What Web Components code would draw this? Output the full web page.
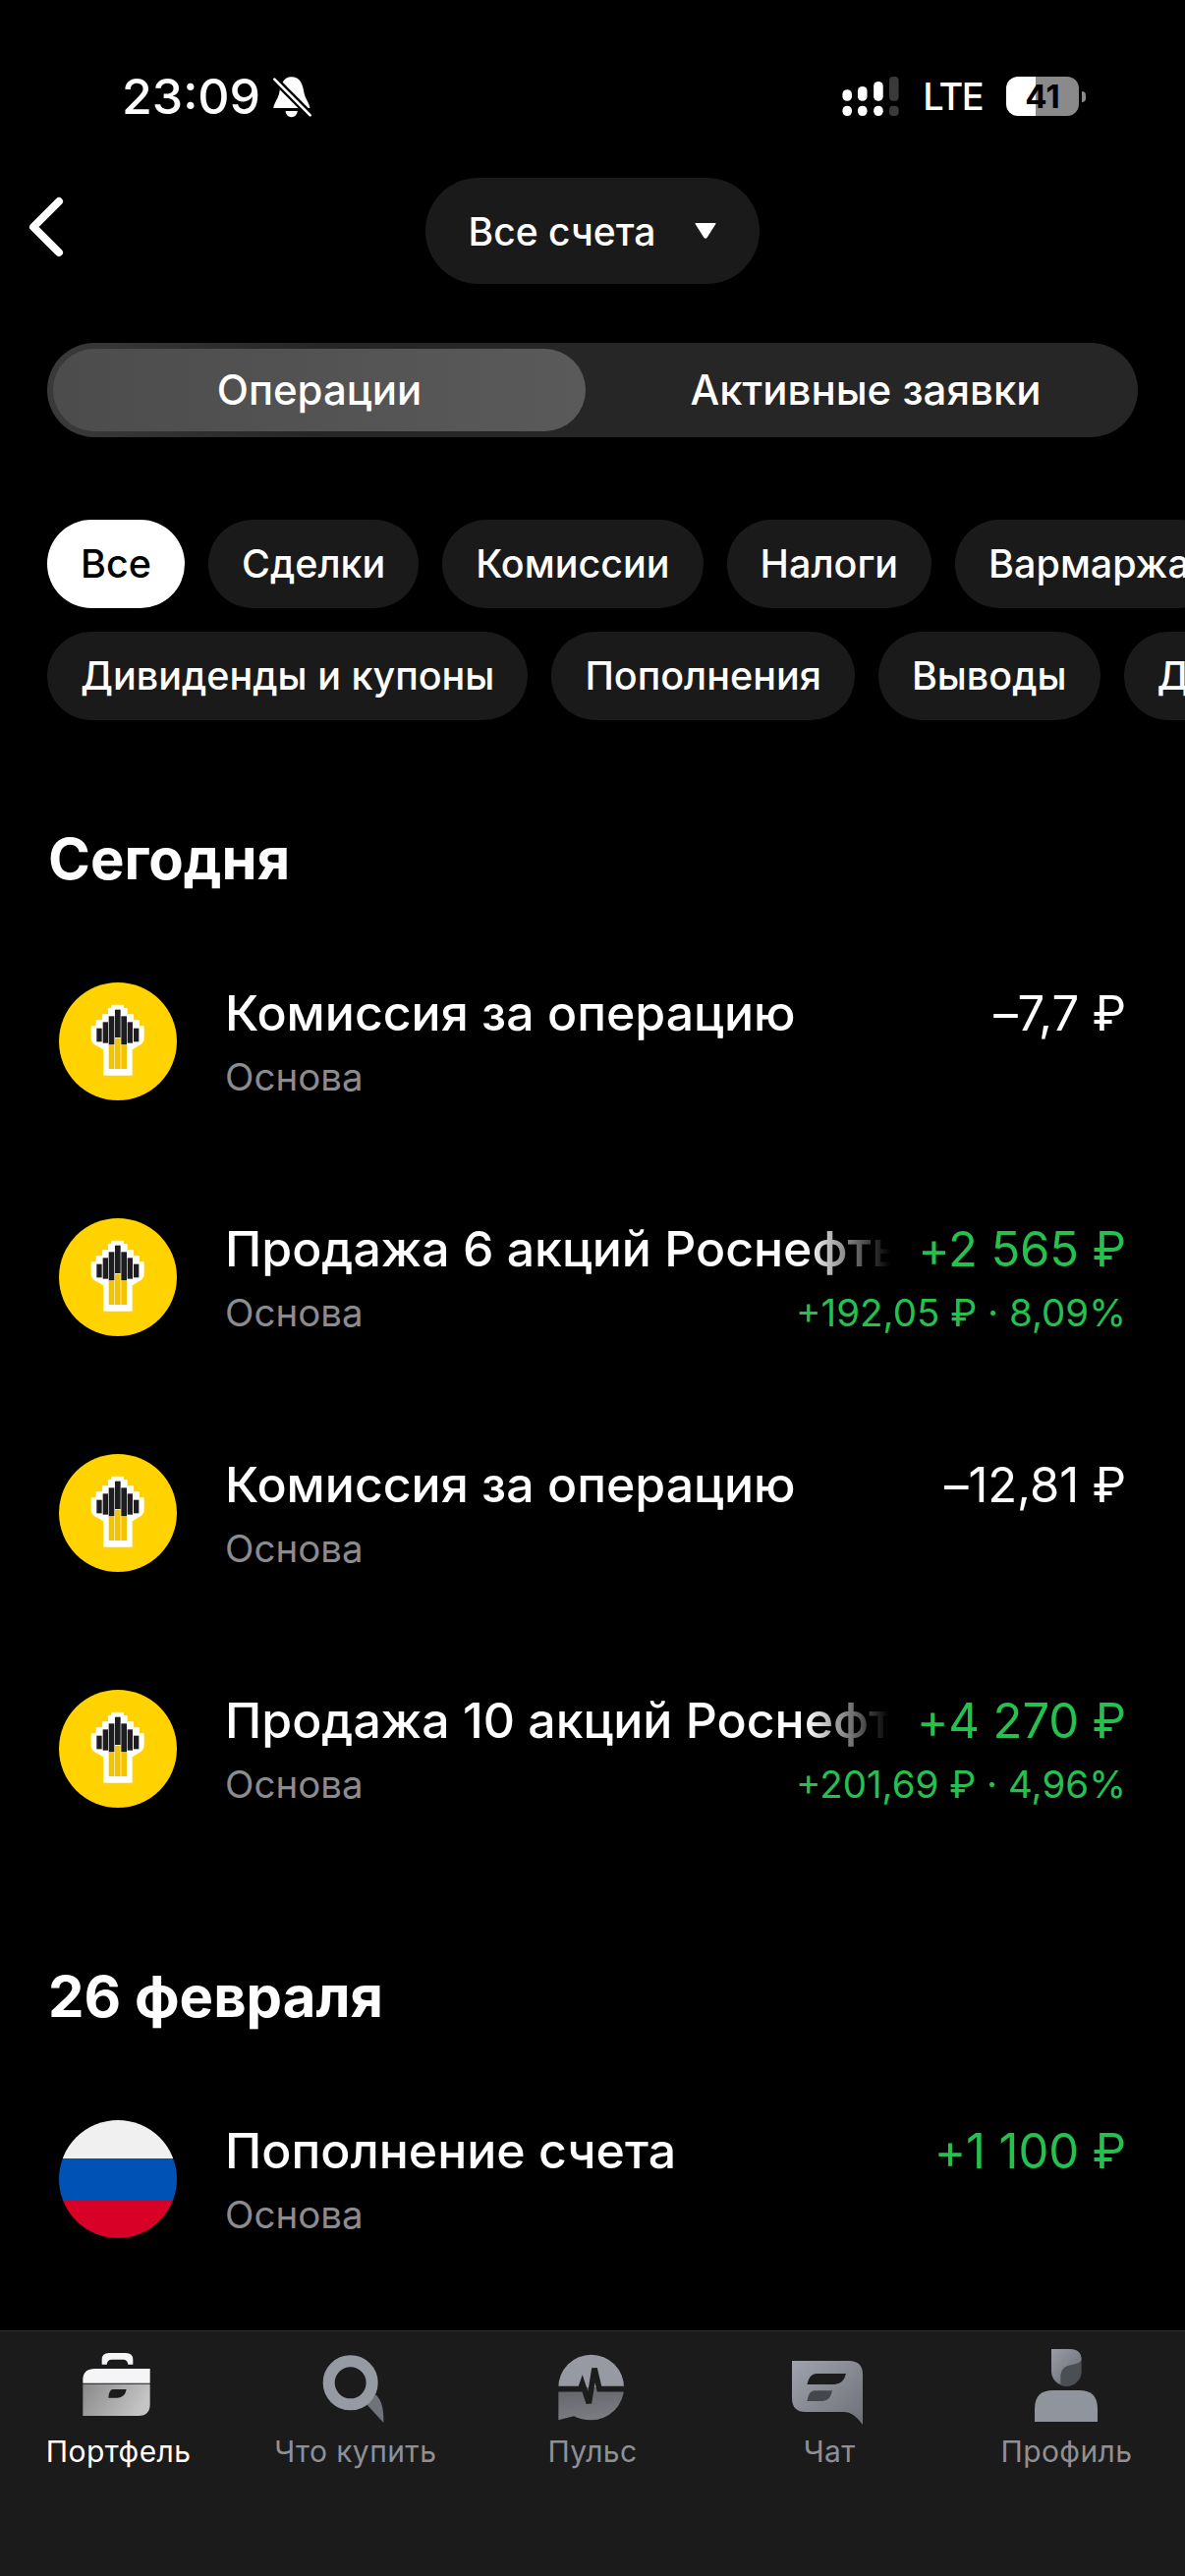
<!DOCTYPE html>
<html lang="ru">
<head>
<meta charset="UTF-8">
<title>Операции</title>
<style>
  html, body { margin: 0; background: #000; }
  body { font-family: Inter, "Noto Sans", sans-serif; color: #fff; width: 1206px; height: 2622px; overflow: hidden; }
</style>
</head>
<body>

<ops-screen>
  <status-bar></status-bar>
  <account-header>Все счета</account-header>
  <seg-tabs first="Операции" second="Активные заявки"></seg-tabs>
  <chip-rows>
    <op-chip active>Все</op-chip><op-chip>Сделки</op-chip><op-chip>Комиссии</op-chip><op-chip>Налоги</op-chip><op-chip>Вармаржа</op-chip>
    <op-chip slot="second">Дивиденды и купоны</op-chip><op-chip slot="second">Пополнения</op-chip><op-chip slot="second">Выводы</op-chip><op-chip slot="second">Другое</op-chip>
  </chip-rows>

  <op-section title="Сегодня">
    <op-row>
      <rosneft-logo slot="icon"></rosneft-logo>
      Комиссия за операцию
      <span slot="amount">–7,7 ₽</span>
    </op-row>
    <op-row fade positive>
      <rosneft-logo slot="icon"></rosneft-logo>
      Продажа 6 акций Роснефть
      <span slot="amount">+2 565 ₽</span>
      <span slot="gain">+192,05 ₽ · 8,09%</span>
    </op-row>
    <op-row>
      <rosneft-logo slot="icon"></rosneft-logo>
      Комиссия за операцию
      <span slot="amount">–12,81 ₽</span>
    </op-row>
    <op-row fade positive>
      <rosneft-logo slot="icon"></rosneft-logo>
      Продажа 10 акций Роснефть
      <span slot="amount">+4 270 ₽</span>
      <span slot="gain">+201,69 ₽ · 4,96%</span>
    </op-row>
  </op-section>

  <op-section title="26 февраля" class="next">
    <op-row positive>
      <flag-ru slot="icon"></flag-ru>
      Пополнение счета
      <span slot="amount">+1 100 ₽</span>
    </op-row>
  </op-section>

  <tab-bar slot="bottom">
    <tab-item active label="Портфель">
      <svg viewBox="0 0 330 300" width="110" height="100">
        <defs>
          <linearGradient id="bc" x1="0" y1="0" x2="1" y2="0.3"><stop offset="0" stop-color="#8a8a8a"/><stop offset="1" stop-color="#c4c4c4"/></linearGradient>
        </defs>
        <g transform="translate(13 15)">
          <path d="M100 65 V50 Q100 30 122 30 H173 Q195 30 195 50 V65 H180 Q178 50 165 50 H130 Q117 50 115 65 Z" fill="#f5f5f7"/>
          <path d="M42 122 V112 Q42 78 80 78 H247 V122 Z" fill="#f5f5f7"/>
          <path d="M42 125 H247 V187 Q247 222 212 222 H42 Z" fill="url(#bc)"/>
          <path d="M134 141 H175 Q170 167 148 167 H120 Q122 141 134 141 Z" fill="#1c1c1c"/>
        </g>
      </svg>
    </tab-item>
    <tab-item label="Что купить">
      <svg viewBox="0 0 330 300" width="110" height="100">
        <path d="M197 200 L226 172 Q252 195 250 258 Z" fill="#6f7278"/>
        <circle cx="149" cy="136" r="66" fill="none" stroke="#959aa3" stroke-width="36"/>
      </svg>
    </tab-item>
    <tab-item label="Пульс">
      <svg viewBox="0 0 330 300" width="110" height="100">
        <defs>
          <linearGradient id="pu" x1="0" y1="0" x2="0.2" y2="1"><stop offset="0" stop-color="#62646a"/><stop offset="1" stop-color="#7a7c82"/></linearGradient>
        </defs>
        <g transform="translate(6 0)">
          <path d="M55 150 A100 100 0 0 1 255 150 Z" fill="#979aa2"/>
          <path d="M55 150 H255 A100 100 0 0 1 155 250 Q125 250 102 238 L55 250 Z" fill="url(#pu)"/>
          <path d="M50 155 H122 L128 138 L148 198 L165 92 L180 155 H260" fill="none" stroke="#1c1c1c" stroke-width="17" stroke-linejoin="miter"/>
        </g>
      </svg>
    </tab-item>
    <tab-item label="Чат">
      <svg viewBox="0 0 330 300" width="110" height="100">
        <defs>
          <linearGradient id="ch" x1="0" y1="0" x2="1" y2="1"><stop offset="0" stop-color="#a0a3ac"/><stop offset="1" stop-color="#6d7076"/></linearGradient>
        </defs>
        <path d="M51 69 H225 Q267 69 267 111 V264 Q240 225 210 225 H93 Q51 225 51 183 Z" fill="url(#ch)"/>
        <path d="M125 108 H216 Q208 141 180 141 H97 Q105 108 125 108 Z" fill="#1c1c1c"/>
        <path d="M120 160 H174 Q168 192 145 192 H97 Q102 160 120 160 Z" fill="#44474c"/>
      </svg>
    </tab-item>
    <tab-item label="Профиль">
      <svg viewBox="0 0 330 300" width="110" height="100">
        <defs>
          <linearGradient id="he" x1="0" y1="0" x2="1" y2="1"><stop offset="0" stop-color="#9a9da6"/><stop offset="1" stop-color="#676a70"/></linearGradient>
        </defs>
        <path d="M69 255 V215 Q69 159 125 159 H205 Q261 159 261 215 V255 Z" fill="#90949c"/>
        <path d="M120 33 H175 Q212 33 212 70 V101 A46 46 0 0 1 120 101 Z" fill="#4b4e53"/>
        <path d="M120 33 H175 Q212 33 212 66 Q205 78 185 80 Q150 84 148 112 L148 140 Q122 130 120 101 Z" fill="url(#he)"/>
      </svg>
    </tab-item>
  </tab-bar>
</ops-screen>

<script>
  // small helper: every element gets its own open shadow root and style
  function comp(name, css, html, init) {
    customElements.define(name, class extends HTMLElement {
      constructor() {
        super();
        const root = this.attachShadow({mode: 'open'});
        root.innerHTML = `<style>${css}</style>${html}`;
      }
      connectedCallback() {
        if (init) init(this, this.shadowRoot);
      }
    });
  }

  comp('ops-screen', `
    :host { display: flex; flex-direction: column; width: 1206px; height: 2622px; background: #000; }
    main { flex: 1; min-height: 0; overflow: hidden; }
  `, `<main><slot></slot></main><slot name="bottom"></slot>`);

  comp('status-bar', `
    :host { display: flex; align-items: center; justify-content: space-between; height: 52px; padding: 72px 101px 57px 124px; }
    .left, .right { display: flex; align-items: center; }
    .time { font-size: 50px; font-weight: 500; line-height: 52px; }
    .left svg { margin-left: 12px; }
    .lte { font-size: 38px; font-weight: 500; line-height: 52px; margin: 0 24px; letter-spacing: -1.6px; }
    .batt { width: 74px; height: 40px; border-radius: 12px; background: linear-gradient(90deg, #fff 41%, #8a8a8a 41%);
      color: #000; font-size: 33px; font-weight: 700; line-height: 40px; text-align: center; }
    .tip { width: 4px; height: 11px; margin-left: 3px; background: #8a8a8a; border-radius: 0 6px 6px 0; }
  `, `
    <div class="left">
      <span class="time">23:09</span>
      <svg viewBox="535 78 122 130" width="41" height="43">
        <path d="M593 82 C620 82 628 105 632 130 C636 150 650 165 650 178 H538 C538 165 552 150 556 130 C560 105 570 82 593 82 Z" fill="#fff"/>
        <path d="M575 187 H612 A18 18 0 0 1 575 187 Z" fill="#fff"/>
        <path d="M538 86 L652 200" stroke="#000" stroke-width="22"/>
        <path d="M541 89 L651 200" stroke="#fff" stroke-width="8" stroke-linecap="round"/>
      </svg>
    </div>
    <div class="right">
      <svg viewBox="178 82 173 121" width="58" height="40">
        <g fill="#fff">
          <rect x="178" y="122" width="29" height="35" rx="14"/><rect x="225" y="112" width="29" height="45" rx="14"/><rect x="274" y="97" width="29" height="60" rx="14"/>
          <rect x="178" y="172" width="29" height="31" rx="14"/><rect x="225" y="172" width="29" height="31" rx="14"/><rect x="274" y="172" width="29" height="31" rx="14"/>
        </g>
        <g fill="#3a3a3a">
          <rect x="322" y="82" width="29" height="75" rx="12"/><rect x="322" y="172" width="29" height="31" rx="12"/>
        </g>
      </svg>
      <span class="lte">LTE</span>
      <span class="batt">41</span><span class="tip"></span>
    </div>
  `);

  comp('account-header', `
    :host { display: grid; grid-template-columns: 1fr auto 1fr; align-items: center; height: 108px; margin-bottom: 60px; }
    svg.back { margin: -8px 0 0 27px; display: block; }
    .pill { display: flex; align-items: center; gap: 40px; height: 108px; padding: 0 44px; border-radius: 54px; background: #1a1a1a;
      font-size: 39px; font-weight: 500; }
  `, `
    <svg class="back" viewBox="0 0 40 62" width="40" height="62">
      <path d="M33 5 L7 31 L33 57" fill="none" stroke="#fff" stroke-width="8" stroke-linecap="round" stroke-linejoin="round"/>
    </svg>
    <div class="pill"><slot></slot>
      <svg viewBox="0 0 22 16" width="22" height="16"><path d="M1 0 H21 Q22 0 21.4 1 L12.5 15 Q11 16.500 9.500 15 L0.600 1 Q0 0 1 0 Z" fill="#fff"/></svg>
    </div>
    <span></span>
  `);

  comp('seg-tabs', `
    :host { display: grid; grid-template-columns: 542px 1fr; box-sizing: border-box; width: 1110px; height: 96px; margin: 0 0 84px 48px; padding: 6px;
      border-radius: 48px; background: linear-gradient(90deg, #3a3a3a, #262626 25%); font-size: 42px; font-weight: 500; line-height: 84px; text-align: center; }
    .on { border-radius: 42px; background: linear-gradient(90deg, #4c4c4c, #5a5a5a); }
    .off { padding-left: 14px; }
  `, `<div class="on"></div><div class="off"></div>`, (el, root) => {
    root.querySelector('.on').textContent = el.getAttribute('first');
    root.querySelector('.off').textContent = el.getAttribute('second');
  });

  comp('chip-rows', `
    :host { display: flex; flex-direction: column; gap: 24px; width: 1206px; overflow: hidden; }
    .row { display: flex; gap: 24px; padding-left: 48px; width: max-content; }
  `, `<div class="row"><slot></slot></div><div class="row"><slot name="second"></slot></div>`);

  comp('op-chip', `
    :host { display: block; height: 90px; padding: 0 34px; border-radius: 45px; background: #1a1a1a; color: #fff;
      font-size: 39.500px; font-weight: 500; line-height: 90px; white-space: nowrap; }
    :host([active]) { background: #fff; color: #000; }
  `, `<slot></slot>`);

  comp('op-section', `
    :host { display: block; }
    h2 { margin: 106px 0 31px 49px; font-size: 58px; font-weight: 700; line-height: 70px; }
    :host(.next) h2 { margin-top: 97px; }
  `, `<h2></h2><slot></slot>`, (el, root) => {
    root.querySelector('h2').textContent = el.getAttribute('title');
  });

  comp('op-row', `
    :host { display: flex; align-items: flex-start; height: 240px; padding: 0 60px; }
    .icon { flex: none; width: 120px; height: 120px; margin: 60px 49px 0 0; }
    .body { flex: 1; min-width: 0; padding-top: 59px; }
    .line { display: flex; justify-content: space-between; height: 65px; line-height: 65px; white-space: nowrap; }
    .title { flex: 1; min-width: 0; overflow: hidden; font-size: 50px; font-weight: 500; }
    :host([fade]) .title { -webkit-mask-image: linear-gradient(90deg, #000 calc(100% - 85px), transparent); mask-image: linear-gradient(90deg, #000 calc(100% - 85px), transparent); }
    .amount { flex: none; margin-left: 28px; font-size: 49px; font-weight: 400; letter-spacing: -0.1px; }
    :host([positive]) .amount { color: #25c04e; }
    .sub { font-size: 38.500px; color: #8b8b90; }
    .gain { font-size: 38.500px; color: #25c04e; }
  `, `
    <div class="icon"><slot name="icon"></slot></div>
    <div class="body">
      <div class="line"><div class="title"><slot></slot></div><div class="amount"><slot name="amount"></slot></div></div>
      <div class="line"><div class="sub">Основа</div><div class="gain"><slot name="gain"></slot></div></div>
    </div>
  `);

  comp('rosneft-logo', `:host { display: block; width: 120px; height: 120px; } svg { display: block; }`, `
    <svg viewBox="60 60 360 360" width="120" height="120">
      <circle cx="240" cy="240" r="180" fill="#ffd200"/>
      <path d="M198 342 V264 L170 248 Q160 242 160 230 V195 H175 V177 H194 V159 H212 V140 H222 V130 H256 V140 H267 V159 H286 V177 H304 V195 H318 V230 Q318 242 308 248 L282 264 V342 Z" fill="#fff" stroke="#fff" stroke-width="4" stroke-linejoin="round"/>
      <g fill="#1d1d20">
        <rect x="175" y="200" width="16" height="41"/><rect x="194" y="181" width="16" height="64"/><rect x="212" y="163" width="17" height="87"/>
        <rect x="231" y="143" width="17" height="85"/><rect x="250" y="163" width="17" height="87"/><rect x="269" y="181" width="16" height="64"/><rect x="288" y="200" width="16" height="41"/>
      </g>
      <g fill="#f4c400">
        <rect x="212" y="252" width="17" height="72"/><rect x="231" y="230" width="17" height="94"/><rect x="250" y="252" width="17" height="72"/>
      </g>
    </svg>`);

  comp('flag-ru', `:host { display: block; width: 120px; height: 120px; border-radius: 50%; overflow: hidden;
      background: linear-gradient(#f0f0f0 0 39px, #0052b4 39px 81px, #d80027 81px); }`, ``);

  comp('tab-bar', `
    :host { display: grid; grid-template-columns: repeat(5, 1fr); box-sizing: border-box; height: 250px; padding-top: 7px; background: #1b1b1c; border-top: 1px solid #333; }
  `, `<slot></slot>`);

  comp('tab-item', `
    :host { display: flex; flex-direction: column; align-items: center; color: #8e9096; font-size: 30px; letter-spacing: 0.4px; }
    :host([active]) { color: #fff; }
    ::slotted(svg) { display: block; }
    .label { line-height: 30px; margin-top: 0; }
  `, `<slot></slot><div class="label"></div>`, (el, root) => {
    root.querySelector('.label').textContent = el.getAttribute('label');
  });
</script>
</body>
</html>
